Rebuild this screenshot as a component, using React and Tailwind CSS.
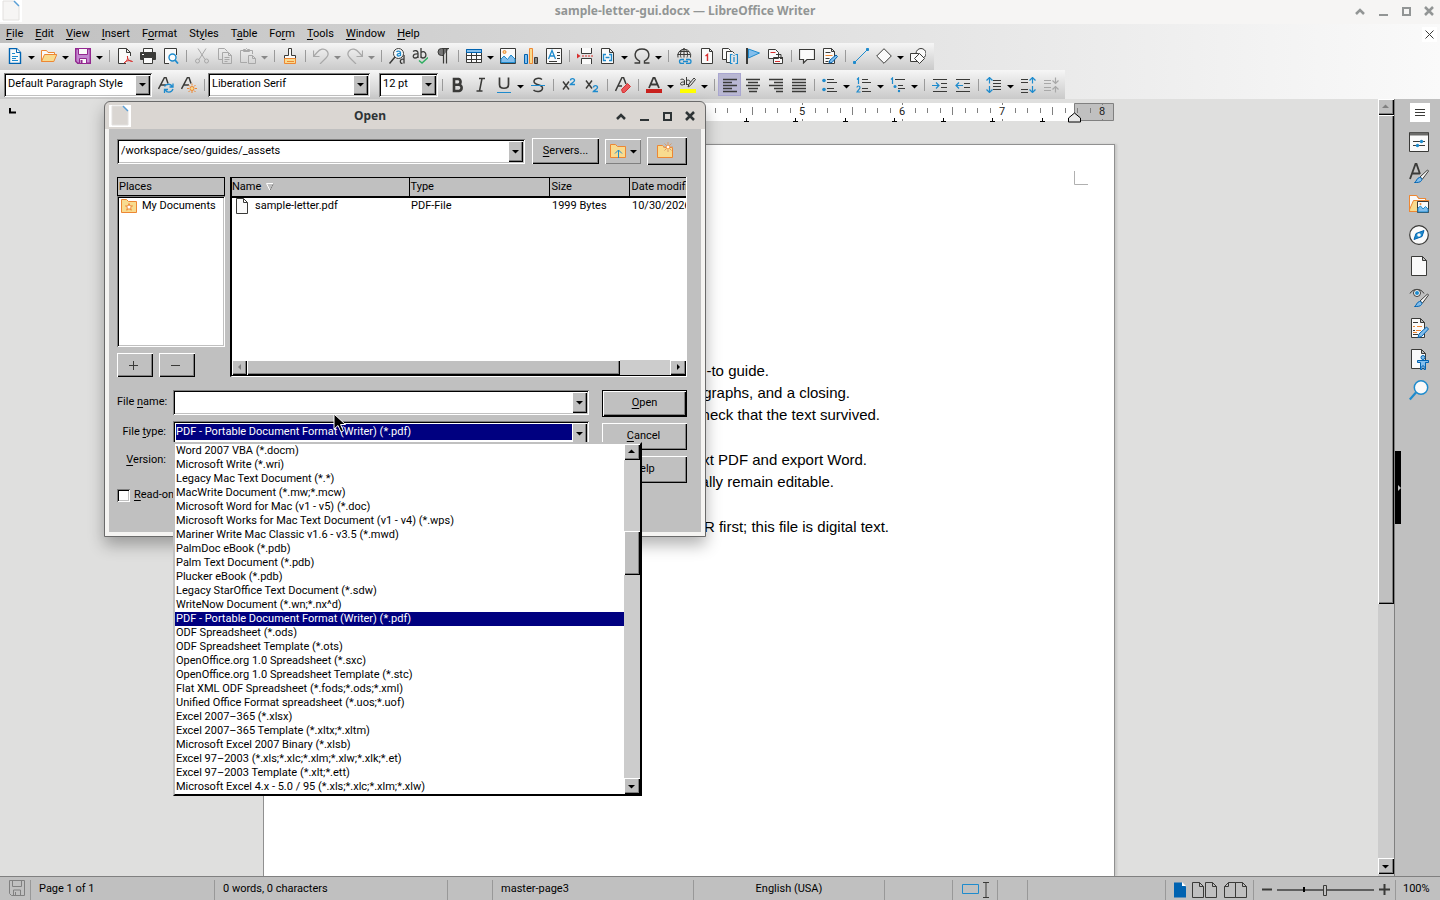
import { useState } from 'react';

const INK = '#3a3a38';
const BLUE = '#1e8bcd';
const ORANGE = '#ed8733';
const RED = '#d8302f';
const DIM = '#a8a8a8';

// 16x16 drawings, keyed by command
const icons = {
  new: (
    <g fill="#fafafa" stroke="#0063b1">
      <path d="M2.5.5h7l4 4v11h-11z" strokeWidth="1.4" />
      <path d="M9.5.5v4h4" />
      <path d="M5 5.5h3M5 8.5h6M5 10.5h4M5 12.5h6" stroke={BLUE} />
    </g>
  ),
  open: (
    <g stroke={ORANGE}>
      <path d="M.5 13.5v-11h5l1.5 2h6.5v3" fill="#fafafa" />
      <path d="M.5 13.5l3-7h12.3l-3 7z" fill="#f8db8f" />
    </g>
  ),
  save: (
    <g stroke="#92278f">
      <path d="M.7.7h14.6v14.6h-12.6l-2-2z" fill="#c387d0" strokeWidth="1.4" />
      <path d="M3.5.5h9v6h-9zM4.5 10.5h7v5h-7z" fill="#fafafa" />
      <path d="M6.5 12v3" strokeWidth="2" />
    </g>
  ),
  pdf: (
    <g fill="#fafafa" stroke={INK}>
      <path d="M9 15.5H1.5V.5h8l4 4V8M9.5.5v4h4" />
      <path d="M7 15c3-1.5 4-4 3.5-7C10 10 12 13.500 15.500 13.500 12.500 12 9 12.500 7 15z" fill="none" stroke={RED} />
    </g>
  ),
  print: (
    <g stroke={INK}>
      <path d="M3.5.5h9v4h-9z" fill="#fafafa" />
      <path d="M.5 4.5h15v7H.5z" fill={INK} />
      <path d="M3.5 9.5h9v6h-9z" fill="#fafafa" />
      <path d="M2 6.5h2" stroke="#fff" />
    </g>
  ),
  preview: (
    <g fill="#fafafa">
      <path d="M6 15.5H1.5V.5h12V7" stroke={INK} />
      <circle cx="9.5" cy="9.5" r="3.5" stroke={BLUE} strokeWidth="1.4" />
      <path d="M12 12l3 3.5" stroke={BLUE} strokeWidth="1.8" />
    </g>
  ),
  cut: (
    <g fill="none" stroke={DIM}>
      <path d="M4 .5l7 11M12 .5l-7 11" />
      <circle cx="3.5" cy="13" r="2" />
      <circle cx="12.5" cy="13" r="2" />
    </g>
  ),
  copy: (
    <g fill="none" stroke={DIM}>
      <path d="M5 11.5H1.5V.5h6l3 3" />
      <path d="M5.5 4.5h6l3 3v8h-9zM11.5 4.5v3h3M7.5 9.5h5M7.5 11.5h5M7.5 13.5h3" />
    </g>
  ),
  paste: (
    <g fill="none" stroke={DIM}>
      <path d="M7 14.5H.5v-12h12V6M3.5 3.5v-2h2l1-1 1 1h2v2z" />
      <path d="M8.5 7.5h4l3 3v5h-7zM12.5 7.5v3h3" />
    </g>
  ),
  clone: (
    <g>
      <path d="M6.5.5h3v7h4v3h-11v-3h4z" fill="#fafafa" stroke={INK} />
      <path d="M2.5 10.5h11v5h-11z" fill="#f8db8f" stroke={ORANGE} />
      <path d="M5 13.5h7" stroke={ORANGE} />
    </g>
  ),
  undo: <path d="M.5 2.5v6h6M.5 8.500l4-4.500C7 1 11 0 13.500 2.500S15 8 13 10l-6 6" fill="none" stroke={DIM} strokeWidth="1.2" />,
  redo: <path d="M15.5 2.500v6h-6M15.5 8.500l-4-4.500C9 1 5 0 2.500 2.500S1 8 3 10l6 6" fill="none" stroke={DIM} strokeWidth="1.2" />,
  find: (
    <g fill="none" stroke={INK}>
      <circle cx="9.5" cy="5.5" r="5" fill="#fafafa" />
      <path d="M6 9l-5.5 6.5" strokeWidth="1.5" />
      <path d="M7.5 4c1-1.5 4-1 4 .5v3.5M11.5 5.5c-4-.5-4 2.5-2 2.5 1 0 2-.8 2-1.5" stroke={BLUE} strokeWidth="1.3" />
      <path d="M15 7v8.5M15 11.5c-4-2-5 4-1.5 4" strokeWidth="1.3" />
    </g>
  ),
  spell: (
    <g fill="none" stroke={INK} strokeWidth="1.3">
      <path d="M1 3.500c2-1.5 5-1 5 1.5v5M6 6C0 5.5.5 10 3 10c2 0 3-1 3-2.5" />
      <path d="M9 0v10M9 4.5C14 1 16 10 11 10c-1 0-2-1-2-2" />
      <path d="M7 12.5l3 2.5 6-5.5" stroke="#2fae60" strokeWidth="1.5" />
    </g>
  ),
  pilcrow: (
    <g fill="none" stroke={INK}>
      <path d="M14 .5H6.5a3.5 3.5 0 0 0 0 7h2" fill="#777" />
      <path d="M8.5.5v15M11.5.5v15" strokeWidth="1.2" />
    </g>
  ),
  table: (
    <g>
      <path d="M.5 1.5h15v13H.5z" fill="#fafafa" stroke={INK} />
      <path d="M.5 1.5h15v3H.5z" fill="#83beec" stroke="#0063b1" />
      <path d="M0 7.5h16M0 11.5h16M5.5 5v9M10.5 5v9" stroke={INK} />
    </g>
  ),
  image: (
    <g>
      <path d="M.5.5h15v15H.5z" fill="#fafafa" stroke={INK} />
      <path d="M1 14.5V11l3-3 3.5 3.5L11 7l4 4v3.5z" fill="#83beec" stroke={BLUE} />
      <circle cx="4.5" cy="4" r="1.5" fill="#f8db8f" stroke={ORANGE} />
    </g>
  ),
  chart: (
    <g>
      <path d="M1.5 6.5h3v9h-3z" fill="#83beec" stroke="#0063b1" />
      <path d="M6.5.5h3v15h-3z" fill="#f8db8f" stroke={ORANGE} />
      <path d="M11.5 9.5h3v6h-3z" fill="#8a8a88" stroke={INK} />
    </g>
  ),
  textbox: (
    <g fill="none" stroke={INK}>
      <path d="M.5.5h15v15H.5z" fill="#fafafa" />
      <path d="M2.5 11L6 2.5 9.5 11M4 8h4" stroke={BLUE} strokeWidth="1.3" />
      <path d="M11 4.5h3M11 7.5h3M11 10.5h3M3 13.5h8" />
    </g>
  ),
  break: (
    <g fill="#fafafa" stroke={INK}>
      <path d="M4.5 0v5.5h10V0M4.5 16v-5.5h10V16" />
      <path d="M5 8h11" stroke={RED} strokeWidth="1.2" strokeDasharray="2 1" />
      <path d="M0 5.5l3.5 2.5L0 10.5z" fill={RED} stroke="none" />
    </g>
  ),
  field: (
    <g fill="#fafafa" stroke={INK}>
      <path d="M1.5.5h8l4 4v11h-12zM9.5.5v4h4" />
      <path d="M6 6.5H3.5v6H6M9 6.5h2.5v6H9M5.5 9.5h4" fill="none" stroke={BLUE} strokeWidth="1.4" />
    </g>
  ),
  omega: <path d="M.5 15h5v-2C-1.500 9 .5 1 8 1s9.5 8 2.500 12v2h5" fill="none" stroke={INK} strokeWidth="1.4" />,
  link: (
    <g fill="none" stroke={INK}>
      <path d="M2 9.5a6.500 6.500 0 1 1 12.500 0M8 .5C4 3 4 7 5 9.5M8 .5c4 2.5 4 6.5 3 9M8 .5v9M1.5 6.5h13M3 3.5h10" />
      <path d="M8 15.5H5.5a2 2 0 0 1 0-4H8M10 11.5h3a2 2 0 0 1 0 4h-3M7 13.5h5" stroke={BLUE} strokeWidth="1.3" />
    </g>
  ),
  footnote: (
    <g fill="#fafafa" stroke={INK}>
      <path d="M2.5.5h8l3 3v12h-11zM10.5.5v3h3" />
      <path d="M6.5 8L8.500 6.5V13" fill="none" stroke={RED} strokeWidth="1.4" />
    </g>
  ),
  endnote: (
    <g fill="#fafafa" stroke={INK}>
      <path d="M.5.5h6l2 2v9h-8z" />
      <path d="M4.5 3.5h6l2 2v9h-8z" />
      <path d="M8 5.5h8V16H8z" stroke="none" fill="#e4e4e4" />
      <path d="M10.5 6.5h-2v9h2M13.5 6.5h2v9h-2M12 9v5M12 7v1" fill="none" stroke={BLUE} strokeWidth="1.2" />
    </g>
  ),
  bookmark: (
    <g>
      <path d="M2 0v16" stroke={INK} strokeWidth="2" />
      <path d="M3.5 1l11 4-11 5z" fill="#83beec" stroke={BLUE} />
    </g>
  ),
  crossref: (
    <g fill="#fafafa" stroke={INK}>
      <path d="M.5 10.5v-9h7l3 3v6zM5.500 15.5v-6h9v6z" />
      <path d="M2.5 4.5h5M7 13.5h5" stroke={RED} />
      <path d="M8 6.5h5v4M11 9l2 2 2-2" fill="none" />
    </g>
  ),
  comment: <path d="M.5 1.5h15v10H8L4.5 15v-3.500h-4z" fill="#fafafa" stroke={INK} strokeWidth="1.2" />,
  track: (
    <g fill="#fafafa" stroke={INK}>
      <path d="M1.5.5h8l3 3v12h-11zM9.5.5v3h3" />
      <path d="M3.5 4.5h5M3.5 10.5h4M3.5 13.5h3" />
      <path d="M3.5 7.5h7" stroke={ORANGE} />
      <path d="M7 15l1-3 6-5 1.5 1.5-5.5 6z" fill="#83beec" stroke="#0063b1" />
    </g>
  ),
  line: (
    <g stroke={BLUE} fill={BLUE}>
      <path d="M2 14L14 2" />
      <path d="M.5 13.5h2v2h-2zM13.5.5h2v2h-2z" />
    </g>
  ),
  shape: <path d="M8 .7L15.3 8 8 15.3.7 8z" fill="#fafafa" stroke={INK} />,
  draw: (
    <g fill="#fafafa" stroke={INK}>
      <circle cx="11" cy="5.5" r="5" />
      <path d="M.5 5.5h8v8h-8z" />
      <path d="M9.5 5.5l5 5-5 5-5-5z" />
    </g>
  ),
  updateStyle: (
    <g fill="none" stroke={INK}>
      <path d="M.5 12L6.5.5H8l2 6M3 8h5" strokeWidth="1.5" />
      <path d="M6.5 9.5C8 6.5 13 6.5 14 9.5M15 6.500v3.500h-3.500M15 12c-1.500 4-6.500 4-7.500 1M6.500 16v-3.500H10" stroke={BLUE} strokeWidth="1.3" />
    </g>
  ),
  newStyle: (
    <g fill="none" stroke={INK}>
      <path d="M.5 12L6.5.5H8l2 6M3 8h5" strokeWidth="1.5" />
      <circle cx="11" cy="11.5" r="2" fill="#f8db8f" stroke={ORANGE} />
      <path d="M11 6.5v2M11 14v2M6 11.5h2M14 11.5h2M7.5 8l1.5 1.5M13 13.5l1.5 1.5M14.5 8L13 9.5M9 13.5L7.5 15" stroke={ORANGE} />
    </g>
  ),
  bold: <path d="M4 2h4.5a3 3 0 0 1 0 5.700H4zM4 7.700h5a3.200 3.200 0 0 1 0 6.300H4z" fill="none" stroke={INK} strokeWidth="2.6" />,
  italic: <path d="M6 1.500h6M3.500 14h6M9 1.500L6.500 14" fill="none" stroke={INK} strokeWidth="1.5" />,
  underline: (
    <g fill="none">
      <path d="M3.5.5v7c0 5 9 5 9 0v-7" stroke={INK} strokeWidth="1.7" />
      <path d="M1 15.5h14" stroke={BLUE} />
    </g>
  ),
  strike: (
    <g fill="none">
      <path d="M12 2.5C9.5.5 4 1 4 4.500 4 8.500 12.500 7 12.500 11c0 4-6.500 4.500-9 2" stroke={INK} strokeWidth="1.5" />
      <path d="M1 8.5h14" stroke={BLUE} />
    </g>
  ),
  sup: (
    <g fill="none" strokeWidth="1.4">
      <path d="M2 4.500l6 8M8 4.500l-6 8" stroke={INK} />
      <path d="M9.500 3.500c0-2.500 4-2.500 4 0 0 1.500-3 2.500-4 4h4.500" stroke={BLUE} />
    </g>
  ),
  sub: (
    <g fill="none" strokeWidth="1.4">
      <path d="M2 3.500l6 8M8 3.500l-6 8" stroke={INK} />
      <path d="M9.500 10.500c0-2.500 4-2.500 4 0 0 1.500-3 2.500-4 4h4.500" stroke={BLUE} />
    </g>
  ),
  clear: (
    <g fill="none" stroke={INK}>
      <path d="M.5 14L7 .5h1.500L11 7M3 9h4" strokeWidth="1.5" />
      <path d="M6.500 12.500l6-6 3 3-6 6h-2z" fill="#e8565a" stroke={RED} />
    </g>
  ),
  fontColor: (
    <g fill="none">
      <path d="M3 11L7.500.5h1L13 11M4.500 7.500h7" stroke={INK} strokeWidth="1.8" />
      <path d="M0 14h16" stroke="#c9211e" strokeWidth="4" />
    </g>
  ),
  highlight: (
    <g fill="none" stroke={INK}>
      <path d="M.5 2.500c2-1 4 0 4 1.500v4M4.500 5c-5-.5-5 3-2.500 3 1 0 2.500-.5 2.500-2M6.500 0v8M6.500 3.500c5-2 5 5 0 4" />
      <path d="M8 10l1-3 5-6 1.500 1.500-5 6z" fill="#ddd" />
      <path d="M0 14h16" stroke="#ff0" strokeWidth="4" />
    </g>
  ),
  left: <path d="M1 2.5h14M1 5.5h9M1 8.5h14M1 11.5h9M1 14.5h14" stroke={INK} strokeWidth="1.3" />,
  center: <path d="M1 2.5h14M3 5.5h10M1 8.5h14M3 11.5h10M4 14.5h8" stroke={INK} strokeWidth="1.3" />,
  right: <path d="M1 2.5h14M6 5.5h9M1 8.5h14M6 11.5h9M8 14.5h7" stroke={INK} strokeWidth="1.3" />,
  justify: <path d="M1 2.5h14M1 5.5h14M1 8.5h14M1 11.5h14M1 14.5h14" stroke={INK} strokeWidth="1.3" />,
  bullets: (
    <g>
      <path d="M5 2.5h7M5 5.5h10M5 11.5h7M5 14.5h10" stroke={INK} />
      <circle cx="2" cy="3.5" r="1.8" fill={BLUE} />
      <circle cx="2" cy="12.5" r="1.8" fill={BLUE} />
    </g>
  ),
  numbers: (
    <g fill="none">
      <path d="M6 2.5h6M6 5.5h9M6 11.5h6M6 14.5h9" stroke={INK} />
      <path d="M1 2.5L2.500 1v6M1 10.500c0-2 3-2 3 0 0 1.500-2 2.500-3 4.500h3.500" stroke={BLUE} strokeWidth="1.2" />
    </g>
  ),
  outline: (
    <g fill="none">
      <path d="M5 2.5h10M8 8.5h5M8 11.5h7M8 14.5h2" stroke={INK} />
      <path d="M1 2.5L2.500 1v6" stroke={BLUE} strokeWidth="1.2" />
      <circle cx="5" cy="9.5" r="1.5" fill={BLUE} />
      <circle cx="9" cy="14" r="1.2" fill={BLUE} />
    </g>
  ),
  indent: (
    <g fill="none">
      <path d="M1 2.5h14M9 6.5h6M9 10.5h6M1 14.5h14" stroke={INK} />
      <path d="M0 8.5h7M4 5.5l3 3-3 3" stroke={BLUE} strokeWidth="1.2" />
    </g>
  ),
  outdent: (
    <g fill="none">
      <path d="M1 2.5h14M9 6.5h6M9 10.5h6M1 14.5h14" stroke={INK} />
      <path d="M1 8.5h7M4 5.5l-3 3 3 3" stroke={BLUE} strokeWidth="1.2" />
    </g>
  ),
  spacing: (
    <g fill="none">
      <path d="M7 3.5h8M7 6.5h8M7 9.5h8M7 12.5h8" stroke={INK} />
      <path d="M3.5.5v6M.5 3.500l3-3 3 3M3.500 9v6.500M.5 12.500l3 3 3-3" stroke={BLUE} strokeWidth="1.2" />
    </g>
  ),
  spaceMore: (
    <g fill="none">
      <path d="M1 2.5h7M1 5.5h7M1 12.5h7M1 15.5h7" stroke={INK} />
      <path d="M12.5.5v6M9.500 3.500l3-3 3 3M12.500 9v6.500M9.500 12.500l3 3 3-3" stroke={BLUE} strokeWidth="1.2" />
    </g>
  ),
  spaceLess: (
    <g fill="none" stroke={DIM}>
      <path d="M1 3.5h7M1 6.5h7M1 10.5h7M1 13.5h7" />
      <path d="M12.5.5v6M9.500 3.500l3 3 3-3M12.500 9v6.500M9.500 12.500l3-3 3 3" strokeWidth="1.2" />
    </g>
  ),
};

// 20x20 drawings for the sidebar decks
const deckIcons = {
  properties: (
    <g>
      <path d="M.5.5h19v19H.5z" fill="#fafafa" stroke={INK} />
      <path d="M1 2h18" stroke="#6a6a68" strokeWidth="3" />
      <path d="M4 9.5h12M4 13.5h12" stroke={INK} />
      <circle cx="12.5" cy="9.5" r="1.7" fill={BLUE} />
      <circle cx="8.5" cy="13.5" r="1.7" fill={BLUE} />
    </g>
  ),
  styles: (
    <g fill="none">
      <path d="M1 16L6.500 1h1L11 11M3 10.500h8" stroke={INK} strokeWidth="1.8" />
      <path d="M11 14l7.500-7 1 1L13.500 16z" fill="#fafafa" stroke={INK} />
      <path d="M5.500 19.500c2-.5 2-4.500 5-5 2 0 3 1.500 2 3-1 2-4 2-7 2z" fill="#83beec" stroke="#0063b1" />
    </g>
  ),
  gallery: (
    <g>
      <path d="M.5 17.500v-16h7l2 3h7v2h3l-2 11z" fill="#f8db8f" stroke={ORANGE} strokeWidth="1.2" />
      <path d="M.5 1.500h7l2 3h7v2h-12l-4 9z" fill="#fafafa" stroke={ORANGE} />
      <path d="M8.500 7.500h11v11h-11z" fill="#fafafa" stroke={INK} />
      <path d="M9 18v-4l2.500-2 2.500 3 2.500-2.500L19 15v3z" fill="#83beec" stroke={BLUE} />
      <circle cx="11.5" cy="10" r="1" fill={ORANGE} />
    </g>
  ),
  navigator: (
    <g>
      <circle cx="10" cy="10" r="9.3" fill="#fafafa" stroke={INK} strokeWidth="1.2" />
      <path d="M15 5.500l-2 6-8 3 2-6z" fill={BLUE} stroke="#0063b1" />
      <circle cx="10" cy="10" r="1.8" fill="#fafafa" />
    </g>
  ),
  page: <path d="M2.5.5h11l4 4v15h-15zM13.500.5v4h4" fill="#fafafa" stroke={INK} />,
  inspector: (
    <g fill="none">
      <path d="M1 6.500C4 1 12 1 15 6.500" stroke={INK} />
      <circle cx="8" cy="6" r="3.5" fill="#fafafa" stroke={INK} />
      <circle cx="8" cy="6" r="2" fill={BLUE} />
      <path d="M11 14l7.500-7 1 1L13.500 16z" fill="#fafafa" stroke={INK} />
      <path d="M5.500 19.500c2-.5 2-4.500 5-5 2 0 3 1.500 2 3-1 2-4 2-7 2z" fill="#83beec" stroke="#0063b1" />
    </g>
  ),
  changes: (
    <g>
      <path d="M2.5.5h9l4 4v15h-13zM11.500.5v4h4" fill="#fafafa" stroke={INK} />
      <path d="M4 4.500h5M4 12.500h2M4 16.500h5" stroke={INK} />
      <path d="M4 8.500h2M8 8.500h5M7 12.500h5M4 14.500h4" stroke={ORANGE} />
      <path d="M9 19.500l1-3.500 7.500-7 2 2-7 7.500z" fill="#83beec" stroke="#0063b1" />
    </g>
  ),
  accessibility: (
    <g>
      <path d="M2.5.5h10l4 4v15h-14zM12.500.5v4h4" fill="#fafafa" stroke={INK} />
      <circle cx="14" cy="8.5" r="2" fill="#83beec" stroke="#0063b1" />
      <path d="M8.500 11.500h11v2h-3v7h-1.500v-3.500h-2v3.500h-1.500v-7h-3z" fill="#83beec" stroke="#0063b1" />
    </g>
  ),
  find: (
    <g>
      <circle cx="12" cy="7.5" r="6.7" fill="#fafafa" stroke={BLUE} strokeWidth="1.5" />
      <path d="M7 12.500L.8 19.500" stroke={BLUE} strokeWidth="2.2" />
    </g>
  ),
};

// '|' is a separator, 'v' the drop arrow of the icon before it, 'vd' a disabled one
const standardBar = [
  'new', 'v', 'open', 'v', 'save', 'v', '|', 'pdf', 'print', 'preview', '|',
  'cut', 'copy', 'paste', 'vd', '|', 'clone', '|', 'undo', 'vd', 'redo', 'vd', '|',
  'find', 'spell', 'pilcrow', '|', 'table', 'v', 'image', 'chart', 'textbox', '|',
  'break', 'field', 'v', 'omega', 'v', '|', 'link', 'footnote', 'endnote', 'bookmark', 'crossref', '|',
  'comment', 'track', '|', 'line', 'shape', 'v', 'draw',
];

const formatBar = [
  '|', 'bold', 'italic', 'underline', 'v', 'strike', '|', 'sup', 'sub', '|', 'clear', '|',
  'fontColor', 'v', 'highlight', 'v', '|', 'left', 'center', 'right', 'justify', '|',
  'bullets', 'v', 'numbers', 'v', 'outline', 'v', '|', 'indent', 'outdent', '|',
  'spacing', 'v', 'spaceMore', 'spaceLess',
];

const menus = ['_File', '_Edit', '_View', '_Insert', 'F_ormat', 'St_yles', 'T_able', 'Fo_rm', '_Tools', '_Window', '_Help'];

const fileTypes = [
  'Word 2007 VBA (*.docm)',
  'Microsoft Write (*.wri)',
  'Legacy Mac Text Document (*.*)',
  'MacWrite Document (*.mw;*.mcw)',
  'Microsoft Word for Mac (v1 - v5) (*.doc)',
  'Microsoft Works for Mac Text Document (v1 - v4) (*.wps)',
  'Mariner Write Mac Classic v1.6 - v3.5 (*.mwd)',
  'PalmDoc eBook (*.pdb)',
  'Palm Text Document (*.pdb)',
  'Plucker eBook (*.pdb)',
  'Legacy StarOffice Text Document (*.sdw)',
  'WriteNow Document (*.wn;*.nx^d)',
  'PDF - Portable Document Format (Writer) (*.pdf)',
  'ODF Spreadsheet (*.ods)',
  'ODF Spreadsheet Template (*.ots)',
  'OpenOffice.org 1.0 Spreadsheet (*.sxc)',
  'OpenOffice.org 1.0 Spreadsheet Template (*.stc)',
  'Flat XML ODF Spreadsheet (*.fods;*.ods;*.xml)',
  'Unified Office Format spreadsheet (*.uos;*.uof)',
  'Excel 2007–365 (*.xlsx)',
  'Excel 2007–365 Template (*.xltx;*.xltm)',
  'Microsoft Excel 2007 Binary (*.xlsb)',
  'Excel 97–2003 (*.xls;*.xlc;*.xlm;*.xlw;*.xlk;*.et)',
  'Excel 97–2003 Template (*.xlt;*.ett)',
  'Microsoft Excel 4.x - 5.0 / 95 (*.xls;*.xlc;*.xlm;*.xlw)',
];

const sunken =
  'bg-white p-[2px] shadow-[inset_1px_1px_0_#808080,inset_-1px_-1px_0_#fff,inset_2px_2px_0_#000,inset_-2px_-2px_0_#c0c0c0]';
const raised =
  'bg-[#c0c0c0] shadow-[inset_1px_1px_0_#fff,inset_-1px_-1px_0_#000,inset_-2px_-2px_0_#808080]';

// text with the letter after "_" underlined
function Mnemonic({ text }) {
  const at = text.indexOf('_');
  if (at < 0) return text;
  return (
    <>
      {text.slice(0, at)}
      <u className="underline-offset-2">{text[at + 1]}</u>
      {text.slice(at + 2)}
    </>
  );
}

function Triangle({ dir = 'down', color = '#000' }) {
  const paths = {
    down: 'M0 3h7L3.5 6.5z',
    up: 'M0 5h7L3.5 1.500z',
    left: 'M5 1v6L2 4z',
    right: 'M3 1v6l3-3z',
  };
  return (
    <svg width="7" height="8" viewBox="0 0 7 8" className="shrink-0">
      <path d={paths[dir]} fill={color} />
    </svg>
  );
}

function ArrowButton({ dir, color, label, className = '' }) {
  return (
    <button type="button" aria-label={label} className={`flex shrink-0 items-center justify-center pb-px pr-px ${raised} ${className}`}>
      <Triangle dir={dir} color={color} />
    </button>
  );
}

function ComboBox({ id, label, value, className = '' }) {
  const [text, setText] = useState(value);
  return (
    <div className={`flex ${sunken} ${className}`}>
      <input
        id={id}
        aria-label={label}
        value={text}
        onChange={(e) => setText(e.target.value)}
        className="min-w-0 flex-1 bg-transparent pl-[2px] outline-none"
      />
      <ArrowButton dir="down" label="Show list" className="w-[15px]" />
    </div>
  );
}

function ToolItems({ items }) {
  return items.map((name, i) => {
    if (name === '|') {
      return (
        <span key={i} className="flex w-2 shrink-0 justify-center">
          <span className="h-3 w-px bg-[#9a9a9a]" />
        </span>
      );
    }
    if (name === 'v' || name === 'vd') {
      return (
        <button key={i} type="button" aria-label="More" className="flex w-[11px] shrink-0 justify-center pt-[2px]">
          <Triangle color={name === 'v' ? '#000' : '#888'} />
        </button>
      );
    }
    return (
      <button
        key={i}
        type="button"
        aria-label={name}
        className={`flex h-[23px] w-[23px] shrink-0 items-center justify-center ${name === 'left' ? 'border border-[#a9a6d0] bg-[#b9b7d3]' : ''}`}
      >
        <svg width="16" height="16" viewBox="0 0 16 16">
          {icons[name]}
        </svg>
      </button>
    );
  });
}

function WindowControls({ color }) {
  const shapes = [
    ['Shade', 'M2 9l4-4 4 4', 2.5],
    ['Minimize', 'M2 10h9', 2],
    ['Maximize', 'M3 3h7v7H3z', 2],
    ['Close', 'M2 2l8 8M10 2l-8 8', 2.5],
  ];
  return shapes.map(([label, d, width]) => (
    <button key={label} type="button" aria-label={label} className="flex h-6 w-[23px] items-center justify-center">
      <svg width="12" height="12" viewBox="0 0 12 12">
        <path d={d} fill="none" stroke={color} strokeWidth={width} />
      </svg>
    </button>
  ));
}

function DocIcon({ fill }) {
  return (
    <svg width="22" height="22" viewBox="0 0 22 22" className="shrink-0">
      <path d="M0 0h22v22H0z" fill="#fff" />
      <path d="M3 1h11l5 5v14H3z" fill={fill} stroke="#e2e0de" />
      <path d="M14 1l5 5" stroke="#5b9fd6" strokeWidth="1.5" />
    </svg>
  );
}

function Ruler() {
  const ticks = [];
  for (let i = 1; i < 68; i++) {
    const x = Math.round(40 + (i - 3) * 12.5) - 0.5;
    if (x > 849) break;
    if ((i - 3) % 8 === 0) {
      ticks.push(<path key={i} d={`M${x} 0v2M${x} 16v2`} stroke="#808080" />);
    } else {
      const tall = (i - 3) % 4 === 0;
      ticks.push(<path key={i} d={tall ? `M${x} 4v8` : `M${x} 5v5`} stroke="#808080" />);
    }
  }
  return (
    <svg width="852" height="20" viewBox="0 0 852 20" className="mx-auto mt-1 block">
      <path d="M0 0h811v18H0z" fill="#fff" />
      <path d="M811.5.5h39v17h-39z" fill="#c0c0c0" stroke="#808080" />
      {ticks}
      {[1, 2, 3, 4, 5, 6, 7, 8].map((n) => (
        <text key={n} x={39 + n * 100} y="12" textAnchor="middle" fontSize="11" fill="#222">
          {n}
        </text>
      ))}
      {[483, 532, 582, 631, 680, 729, 779].map((x) => (
        <path key={x} d={`M${x - 2} 18.5h5M${x + 0.5} 15v4`} stroke="#000" />
      ))}
      <path d="M805.5 19v-4l6-5 6 5v4z" fill="#e8e8e8" stroke="#000" />
    </svg>
  );
}

const letter = [
  { text: '-to guide.', width: 'w-[505px]' },
  { text: 'graphs, and a closing.', width: 'w-[586px]' },
  { text: 'check that the text survived.', width: 'w-[616px]' },
  { text: '' },
  { text: 'xt PDF and export Word.', width: 'w-[603px]' },
  { text: 'ally remain editable.', width: 'w-[570px]' },
  { text: '' },
  { text: 'R first; this file is digital text.', width: 'w-[625px]' },
];

function Document() {
  return (
    <div className="flex min-w-0 flex-1 flex-col overflow-hidden bg-[#dfdfde]">
      <div className="relative">
        <Ruler />
        <svg width="8" height="8" viewBox="0 0 8 8" className="absolute left-2 top-2">
          <path d="M2 1v4.500h6" fill="none" stroke="#000" strokeWidth="2" />
        </svg>
      </div>
      <main className="mx-auto mt-[21px] w-[852px] flex-1 border border-b-0 border-[#909090] bg-white shadow-[2px_0_2px_#c8c8c6] font-['Liberation_Sans',sans-serif] text-[15px] leading-[22px] text-black">
        <svg width="14" height="14" viewBox="0 0 14 14" className="ml-auto mr-[26px] mt-[26px]">
          <path d="M.5 0v13.500H14" fill="none" stroke="#b0b0b0" />
        </svg>
        <div className="mt-[175px]">
          {letter.map((line, i) =>
            line.text ? (
              <p key={i} className={`h-[22px] whitespace-nowrap text-right ${line.width}`}>
                {line.text}
              </p>
            ) : (
              <p key={i} className="h-[23px]" />
            )
          )}
        </div>
      </main>
    </div>
  );
}

function OpenDialog() {
  const [type, setType] = useState('PDF - Portable Document Format (Writer) (*.pdf)');
  return (
    <section
      role="dialog"
      aria-label="Open"
      className="absolute left-[104px] top-[101px] flex h-[436px] w-[602px] flex-col rounded-t-md border border-[#6a6a6a] bg-[#dad6d2] shadow-[0_8px_16px_rgba(0,0,0,0.3)]"
    >
      <header className="flex h-[27px] shrink-0 items-center pl-1 pr-1">
        <DocIcon fill="#dad6d2" />
        <h2 className="flex-1 text-center font-['Noto_Sans',sans-serif] text-[12px] font-bold text-[#2e3436]">Open</h2>
        <WindowControls color="#2e3436" />
      </header>
      <div className="flex-1 border-4 border-t-0 border-[#f5f4f2] bg-[#c0c0c0] pl-2 pr-[14px] pt-2">
        <div className="flex h-7 items-center">
          <ComboBox label="Path" value="/workspace/seo/guides/_assets" className="h-[25px] flex-1" />
          <button type="button" className={`ml-[7px] h-[26px] w-[67px] ${raised}`}>
            <Mnemonic text="_Servers..." />
          </button>
          <button
            type="button"
            aria-label="Up one level"
            className="ml-[6px] flex h-[25px] w-9 items-center justify-center gap-1 shadow-[inset_1px_1px_0_#fff,inset_-1px_-1px_0_#808080]"
          >
            <svg width="16" height="16" viewBox="0 0 16 16">
              <path d="M.5 14.500v-13h5l2 2h8v11z" fill="#f8db8f" stroke={ORANGE} />
              <path d="M8.500 15V7M5 10.500L8.500 7l3.500 3.500" fill="none" stroke={BLUE} />
            </svg>
            <Triangle />
          </button>
          <button type="button" aria-label="Create new folder" className={`ml-[6px] flex h-7 w-10 items-center justify-center pr-1 ${raised}`}>
            <svg width="18" height="18" viewBox="0 0 18 18">
              <path d="M1.500 15.500v-12h5l2 2h8v10z" fill="#f8db8f" stroke={ORANGE} />
              <circle cx="12" cy="5" r="2" fill="#fff" stroke={ORANGE} />
              <path d="M12 0v2M12 8v2M7 5h2M15 5h2M8.500 1.500L10 3M14 7l1.500 1.500M15.500 1.500L14 3M10 7L8.500 8.500" stroke="#d99a6a" />
            </svg>
          </button>
        </div>

        <div className="mt-3 flex h-[200px] gap-[5px]">
          <div className="flex w-[108px] flex-col">
            <div className="h-[19px] border border-black pl-px leading-[17px]">Places</div>
            <ul className={`h-[152px] ${sunken}`}>
              <li className="flex items-center gap-[5px] whitespace-nowrap pl-[2px] leading-[16px]">
                <svg width="16" height="16" viewBox="0 0 16 16">
                  <path d="M.5 14.500v-13h5l2 2h8v11z" fill="#f8db8f" stroke={ORANGE} />
                  <path d="M8 5.500l1 2.500h2.500l-2 1.700.8 2.500L8 10.700l-2.300 1.500.8-2.500-2-1.700H7z" fill="#fff" stroke={ORANGE} />
                </svg>
                My Documents
              </li>
            </ul>
            <div className="mt-[6px] flex gap-[6px]">
              <button type="button" aria-label="Add place" className={`flex h-6 w-9 items-center justify-center pr-[3px] ${raised}`}>
                <svg width="9" height="9" viewBox="0 0 9 9">
                  <path d="M0 4.500h9M4.500 0v9" stroke={INK} />
                </svg>
              </button>
              <button type="button" aria-label="Remove place" className={`flex h-6 w-9 items-center justify-center pr-[3px] ${raised}`}>
                <svg width="9" height="9" viewBox="0 0 9 9">
                  <path d="M0 4.500h9" stroke={INK} />
                </svg>
              </button>
            </div>
          </div>

          <div className="flex min-w-0 flex-1 flex-col overflow-hidden border-b border-l-2 border-r border-b-white border-l-black border-r-white bg-white">
            <table className="w-full table-fixed text-left">
              <colgroup>
                <col className="w-[177px]" />
                <col className="w-[140px]" />
                <col className="w-[80px]" />
                <col />
              </colgroup>
              <thead>
                <tr className="h-[19px] bg-[#c0c0c0] leading-[16px]">
                  <th className="border-b-2 border-t border-black p-0 font-normal">
                    <span className="flex items-center gap-[5px]">
                      Name
                      <svg width="8" height="8" viewBox="0 0 8 8">
                        <path d="M.5.5h7L4 7.500z" fill="none" stroke="#fff" />
                        <path d="M7.500.5L4 7.500" stroke="#808080" />
                      </svg>
                    </span>
                  </th>
                  <th className="border-b-2 border-l border-t border-black p-0 pl-px font-normal">Type</th>
                  <th className="border-b-2 border-l border-t border-black p-0 pl-[2px] font-normal">Size</th>
                  <th className="overflow-hidden whitespace-nowrap border-b-2 border-l border-t border-black p-0 pl-[2px] font-normal">
                    Date modified
                  </th>
                </tr>
              </thead>
              <tbody>
                <tr className="h-4 leading-[16px]">
                  <td className="p-0">
                    <span className="flex items-center gap-[7px] pl-1">
                      <svg width="12" height="16" viewBox="0 0 12 16">
                        <path d="M.5.5h7l4 4v11H.5zM7.500.5v4h4" fill="#fafafa" stroke={INK} />
                      </svg>
                      sample-letter.pdf
                    </span>
                  </td>
                  <td className="p-0 pl-[2px]">PDF-File</td>
                  <td className="p-0 pl-[3px]">1999 Bytes</td>
                  <td className="overflow-hidden whitespace-nowrap p-0 pl-[3px]">10/30/2026</td>
                </tr>
              </tbody>
            </table>
            <div className="mt-auto flex h-4 border-b border-black bg-[#ccc]">
              <ArrowButton dir="left" color="#808080" label="Scroll left" className="w-[15px]" />
              <div className={`w-[373px] ${raised}`} />
              <ArrowButton dir="right" label="Scroll right" className="ml-auto w-4" />
            </div>
          </div>
        </div>

        <div className="mt-[13px] flex gap-[13px]">
          <div className="flex-1">
            <div className="flex h-[25px] items-center">
              <label htmlFor="file-name" className="w-[56px] whitespace-nowrap pr-[7px] text-right">
                <Mnemonic text="File _name:" />
              </label>
              <ComboBox id="file-name" value="" className="h-[25px] flex-1" />
            </div>
            <div className="relative mt-[6px] flex h-[25px]">
              <label htmlFor="file-type" className="w-[56px] whitespace-nowrap pr-[7px] text-right leading-[22px]">
                <Mnemonic text="File _type:" />
              </label>
              <div className={`flex flex-1 ${sunken}`}>
                <select
                  id="file-type"
                  value={type}
                  onChange={(e) => setType(e.target.value)}
                  className="mb-1 ml-px mt-px h-4 min-w-0 flex-1 appearance-none bg-[#000080] leading-[16px] text-white outline-none"
                >
                  {fileTypes.map((name) => (
                    <option key={name}>{name}</option>
                  ))}
                </select>
                <ArrowButton dir="down" label="Show file types" className="w-[15px]" />
              </div>
              <div className="absolute left-[56px] top-[21px] z-10 flex h-[354px] w-[469px] border-2 border-b-black border-l-[#c0c0c0] border-r-black border-t-[#c0c0c0] bg-white">
                <ul role="listbox" aria-label="File types" className="flex-1">
                  {fileTypes.map((name) => (
                    <li
                      key={name}
                      role="option"
                      aria-selected={name === type}
                      onClick={() => setType(name)}
                      className={`h-[14px] whitespace-nowrap pl-px leading-[14px] ${name === type ? 'bg-[#000080] text-white' : 'text-black'}`}
                    >
                      {name}
                    </li>
                  ))}
                </ul>
                <div className="flex w-4 flex-col bg-[#ccc]">
                  <ArrowButton dir="up" label="Scroll up" className="h-4" />
                  <div className={`mt-[71px] h-11 ${raised}`} />
                  <ArrowButton dir="down" label="Scroll down" className="mt-auto h-4" />
                </div>
              </div>
            </div>
            <p className="mt-[3px] w-[56px] pr-[7px] text-right leading-[22px]">
              <Mnemonic text="_Version:" />
            </p>
            <label className="mt-[13px] flex items-center gap-1 whitespace-nowrap leading-[22px]">
              <input type="checkbox" className={`h-[13px] w-[13px] appearance-none ${sunken}`} />
              <span>
                <Mnemonic text="_Read-only" />
              </span>
            </label>
          </div>
          <div className="flex w-[85px] flex-col gap-[6px]">
            <button type="button" className={`h-[27px] border border-black ${raised}`}>
              <Mnemonic text="_Open" />
            </button>
            <button type="button" className={`h-[27px] pr-[2px] ${raised}`}>
              <Mnemonic text="_Cancel" />
            </button>
            <button type="button" className={`h-[27px] pr-[2px] ${raised}`}>
              <Mnemonic text="_Help" />
            </button>
          </div>
        </div>
      </div>
    </section>
  );
}

function StatusBar() {
  const cell = 'flex h-5 items-center border-l border-[#989898]';
  return (
    <footer className="flex h-6 shrink-0 items-center border-t border-[#808080] bg-[#c0c0c0] pt-[2px]">
      <span className="flex w-[30px] justify-center pb-1 pl-1">
        <svg width="16" height="16" viewBox="0 0 16 16">
          <path d="M.5.5h15v15h-13l-2-2zM3.500.5v6h9v-6M4.500 15v-5h7v5M6.500 12v3" fill="none" stroke="#808080" />
        </svg>
      </span>
      <span className={`${cell} w-[184px] pl-2`}>Page 1 of 1</span>
      <span className={`${cell} w-[233px] pl-2`}>0 words, 0 characters</span>
      <span className={`${cell} w-[45px]`} />
      <span className={`${cell} w-[201px] pl-2`}>master-page3</span>
      <span className={`${cell} w-[191px] justify-center`}>English (USA)</span>
      <span className={`${cell} w-[68px]`} />
      <span className={`${cell} w-[45px] gap-1 pl-[9px]`}>
        <svg width="28" height="16" viewBox="0 0 28 16">
          <path d="M.5 2.500h16v9H.5z" fill="none" stroke={BLUE} />
          <path d="M21 .5h6M21 15.500h6M24 1v14" stroke={INK} />
        </svg>
      </span>
      <span className={`${cell} w-[30px]`} />
      <span className={`${cell} flex-1`} />
      <span className={`${cell} w-[88px] pl-2`}>
        <svg width="76" height="16" viewBox="0 0 76 16">
          <path d="M0 .5h8l4 4v11H0z" fill="#0063b1" />
          <path d="M8 0v4h4" fill="#fff" />
          <g fill="none" stroke={INK}>
            <path d="M18.500.5h7l4 4v11h-11zM25.500.5v4h4M31.500.5h7l4 4v11h-11zM38.500.5v4h4" />
            <path d="M61.500 15.500h-11v-11l4-4h7zM61.500.5h7l4 4v11h-11zM54.500.5v4h-4M68.500.5v4h4" />
          </g>
        </svg>
      </span>
      <span className={`${cell} w-[142px] pl-2`}>
        <svg width="128" height="14" viewBox="0 0 128 14">
          <path d="M0 6.500h10M117 6.500h11M122.500 1v11" stroke={INK} strokeWidth="2" />
          <path d="M15 7h97" stroke="#000" strokeWidth="1.200" />
          <path d="M42 4v5" stroke="#000" strokeWidth="2" />
          <path d="M61.500 2.500h3v10h-3z" fill="#c0c0c0" stroke={INK} />
        </svg>
      </span>
      <span className={`${cell} w-[45px] pl-[7px]`}>100%</span>
    </footer>
  );
}

export default function App() {
  return (
    <div className="relative flex h-screen w-full flex-col overflow-hidden bg-[#c0c0c0] font-[Roboto,'Noto_Sans',sans-serif] text-[11px] text-black">
      <header className="flex h-6 shrink-0 items-center overflow-hidden bg-[#f6f5f4] pb-[2px]">
        <DocIcon fill="#f6f5f4" />
        <h1 className="flex-1 text-center font-['Noto_Sans',sans-serif] text-[12px] font-bold text-[#929595]">
          sample-letter-gui.docx — LibreOffice Writer
        </h1>
        <WindowControls color="#929595" />
      </header>

      <div className="shrink-0 bg-linear-to-r from-[#c0c0c0] to-[#fafafa]">
        <nav className="flex h-[19px] items-center gap-3 pl-[6px] pr-[3px] pt-px">
          {menus.map((m) => (
            <button key={m} type="button">
              <Mnemonic text={m} />
            </button>
          ))}
          <button type="button" aria-label="Close document" className="ml-auto flex h-[15px] w-[15px] items-center justify-center bg-white">
            <svg width="9" height="9" viewBox="0 0 9 9">
              <path d="M.5.5l8 8M8.500.5l-8 8" stroke={INK} />
            </svg>
          </button>
        </nav>
        <div className="flex h-[27px] w-fit items-center bg-linear-to-b from-[#f6f6f6] to-[#cacaca] pb-[2px] pl-[3px] pr-[5px]">
          <ToolItems items={standardBar} />
        </div>
        <div className="flex h-[29px] w-fit items-center bg-linear-to-b from-[#f6f6f6] to-[#cacaca] pl-1 pr-[3px]">
          <ComboBox label="Paragraph style" value="Default Paragraph Style" className="mr-[2px] h-6 w-[148px]" />
          <ToolItems items={['updateStyle', 'newStyle', '|']} />
          <ComboBox label="Font name" value="Liberation Serif" className="h-6 w-[162px]" />
          <ComboBox label="Font size" value="12 pt" className="ml-[9px] h-6 w-[59px]" />
          <ToolItems items={formatBar} />
        </div>
      </div>

      <div className="flex min-h-0 flex-1">
        <Document />
        <div className="flex w-[17px] shrink-0 flex-col border-r border-[#808080] bg-[#ccc]">
          <ArrowButton dir="up" color="#808080" label="Scroll up" className="h-4" />
          <div className={`h-[489px] ${raised}`} />
          <ArrowButton dir="down" label="Scroll down" className="mb-[2px] mt-auto h-4" />
        </div>
        <aside className="flex w-[45px] shrink-0 bg-[#c0c0c0]">
          <button type="button" aria-label="Hide sidebar" className="flex h-[73px] w-[6px] items-center self-center bg-black">
            <Triangle dir="right" color="#c0c0c0" />
          </button>
          <div className="flex flex-1 flex-col items-center pr-[2px] pt-1">
            <button type="button" aria-label="Sidebar settings" className="mb-[5px] flex h-[19px] w-5 items-center justify-center bg-white">
              <svg width="10" height="9" viewBox="0 0 10 9">
                <path d="M0 1.500h10M0 4.500h10M0 7.500h10" stroke={INK} />
              </svg>
            </button>
            {Object.entries(deckIcons).map(([name, drawing]) => (
              <button key={name} type="button" aria-label={name} className="flex h-[31px] items-center">
                <svg width="21" height="21" viewBox="0 0 21 21">
                  {drawing}
                </svg>
              </button>
            ))}
          </div>
        </aside>
      </div>

      <StatusBar />
      <OpenDialog />

      <svg width="14" height="20" viewBox="0 0 14 20" className="absolute left-[333px] top-[413px] z-20">
        <path d="M1 1v15l4-3.500 3 6.500 2.500-1-3-6.500h5z" fill="#000" stroke="#fff" />
      </svg>
    </div>
  );
}
